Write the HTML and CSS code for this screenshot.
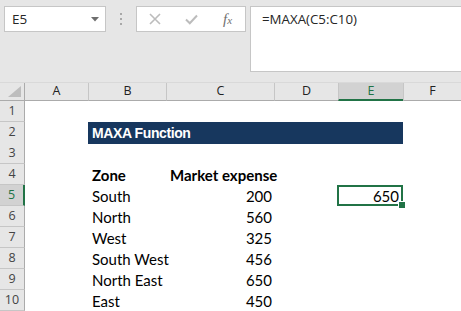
FILE: index.html
```html
<!DOCTYPE html>
<html>
<head>
<meta charset="utf-8">
<link rel="stylesheet" href="styles.css">
</head>
<body>
<div class="app">
  <div class="toolbar">
    <div class="namebox">
      <span class="ref">E5</span>
      <svg class="caret" width="8" height="5" viewBox="0 0 8 5"><path d="M0 0H8L4 4.5Z" fill="#6e6e6e"/></svg>
    </div>
    <div class="grip"><i></i><i></i><i></i></div>
    <div class="fbtns">
      <svg class="btn-x" width="12" height="12" viewBox="0 0 12 12"><path d="M1 1L11 11M11 1L1 11" stroke="#bcbcbc" stroke-width="1.6" fill="none"/></svg>
      <svg class="btn-ok" width="13" height="11" viewBox="0 0 13 11"><path d="M1 5.5L4.8 9.2L12 1.5" stroke="#bcbcbc" stroke-width="2" fill="none"/></svg>
      <span class="fx"><span class="fx-f">f</span><span class="fx-x">x</span></span>
    </div>
    <div class="formula">=MAXA(C5:C10)</div>
  </div>

  <div class="sheet">
    <div class="row hdr">
      <div class="corner"><svg width="13" height="11" viewBox="0 0 13 11"><path d="M13 0V11H0Z" fill="#bdbdbd"/></svg></div>
      <div class="ch first">A</div>
      <div class="ch">B</div>
      <div class="ch">C</div>
      <div class="ch">D</div>
      <div class="ch sel">E</div>
      <div class="ch">F</div>
    </div>

    <div class="row"><div class="rh">1</div></div>
    <div class="row"><div class="rh">2</div><div class="title">MAXA Function</div></div>
    <div class="row"><div class="rh">3</div></div>
    <div class="row">
      <div class="rh">4</div><div class="c"></div>
      <div class="c b">Zone</div><div class="c b">Market expense</div>
    </div>
    <div class="row">
      <div class="rh sel">5</div><div class="c"></div>
      <div class="c">South</div><div class="c num">200</div><div class="c"></div>
      <div class="c num active">650</div>
    </div>
    <div class="row"><div class="rh">6</div><div class="c"></div><div class="c">North</div><div class="c num">560</div></div>
    <div class="row"><div class="rh">7</div><div class="c"></div><div class="c">West</div><div class="c num">325</div></div>
    <div class="row"><div class="rh">8</div><div class="c"></div><div class="c">South West</div><div class="c num">456</div></div>
    <div class="row"><div class="rh">9</div><div class="c"></div><div class="c">North East</div><div class="c num">650</div></div>
    <div class="row"><div class="rh">10</div><div class="c"></div><div class="c">East</div><div class="c num">450</div></div>
  </div>
</div>
</body>
</html>
```
FILE: styles.css
```css
* { box-sizing: border-box; }
html, body { margin: 0; padding: 0; overflow: hidden; }
body { width: 461px; height: 311px; background: #fff; }

.app { width: 461px; height: 311px; overflow: hidden; display: flex; flex-direction: column; }

.toolbar {
  height: 82px;
  flex: none;
  background: #e6e6e6;
  display: flex;
  align-items: flex-start;
  padding: 6px 0 0 4px;
  font-family: "Open Sans", "Noto Sans", sans-serif;
}
.toolbar > * { flex: none; }

.namebox {
  width: 102px;
  height: 26px;
  background: #fff;
  border: 1px solid #c6c6c6;
  display: flex;
  align-items: center;
  justify-content: space-between;
  padding: 0 6px 0 7px;
}
.ref { font-size: 13.5px; color: #262626; }
.caret { display: block; margin-top: 1px; }

.grip {
  width: 30px;
  height: 26px;
  display: flex;
  flex-direction: column;
  align-items: center;
  justify-content: center;
  gap: 3px;
}
.grip i { display: block; width: 2px; height: 2px; background: #a8a8a8; }

.fbtns {
  width: 110px;
  height: 26px;
  background: #fff;
  border: 1px solid #c6c6c6;
  display: flex;
  align-items: center;
  padding: 0 0 0 12px;
}
.btn-x { display: block; }
.btn-ok { display: block; margin-left: 24px; }
.fx {
  margin-left: 25px;
  font-family: "Liberation Serif", serif;
  font-style: italic;
  color: #707070;
  line-height: 1;
  display: flex;
  align-items: baseline;
}
.fx-f { font-size: 15px; }
.fx-x { font-size: 11px; margin-left: 0; }

.formula {
  width: 240px;
  height: 66px;
  margin-left: 4px;
  background: #fff;
  border: 1px solid #c6c6c6;
  padding: 3px 0 0 11px;
  font-size: 13.3px;
  color: #262626;
}

.sheet { flex: 1; display: flex; flex-direction: column; }

.row {
  display: grid;
  grid-template-columns: 25px 63px 78px 108px 64px 65px 1fr;
  height: 21px;
  flex: none;
  font-family: "Lato", "Noto Sans", sans-serif;
  font-size: 15px;
  color: #000;
}
.row.hdr {
  height: 19px;
  background: #e6e6e6;
  border-top: 1px solid #d9d9d9;
  font-family: "Open Sans", "Noto Sans", sans-serif;
  font-size: 12.5px;
}

.corner {
  border-right: 1px solid #ababab;
  border-bottom: 1px solid #ababab;
  display: flex;
  align-items: flex-end;
  justify-content: flex-end;
  padding: 0 3px 3px 0;
}
.corner svg { display: block; }

.ch {
  border-left: 1px solid #c6c6c6;
  border-bottom: 1px solid #ababab;
  display: flex;
  align-items: center;
  justify-content: center;
  color: #222;
  line-height: 1;
}
.ch.first { border-left: none; }
.ch.sel {
  background: #d2d2d2;
  color: #217346;
  border-bottom: 2px solid #217346;
}

.rh {
  background: #e6e6e6;
  border-right: 1px solid #ababab;
  border-bottom: 1px solid #c6c6c6;
  display: flex;
  align-items: center;
  justify-content: center;
  font-family: "Open Sans", "Noto Sans", sans-serif;
  font-size: 12.5px;
  color: #444;
  line-height: 1;
}
.rh.sel {
  background: #d2d2d2;
  color: #217346;
  border-right: 2px solid #217346;
}

.c {
  display: flex;
  align-items: flex-end;
  padding: 0 4px 1px 4px;
  white-space: nowrap;
  line-height: 1.2;
}
.c.b { font-weight: 700; }
.c.num { justify-content: flex-end; padding-right: 2px; }

.c.active { position: relative; padding-right: 4px; }
.c.active::after {
  content: "";
  position: absolute;
  top: 0;
  left: -1px;
  right: 0;
  bottom: 0;
  border: 2px solid #217346;
}
.c.active::before {
  content: "";
  position: absolute;
  right: -3px;
  bottom: -3px;
  width: 6px;
  height: 6px;
  background: #217346;
  border: 1px solid #fff;
  z-index: 1;
}

.title {
  grid-column: 3 / 7;
  background: #17375e;
  color: #fff;
  font-family: "Liberation Sans", Arial, sans-serif;
  font-weight: 700;
  font-size: 14px;
  letter-spacing: -0.4px;
  display: flex;
  align-items: center;
  padding-left: 4px;
  height: 22px;
}
```
